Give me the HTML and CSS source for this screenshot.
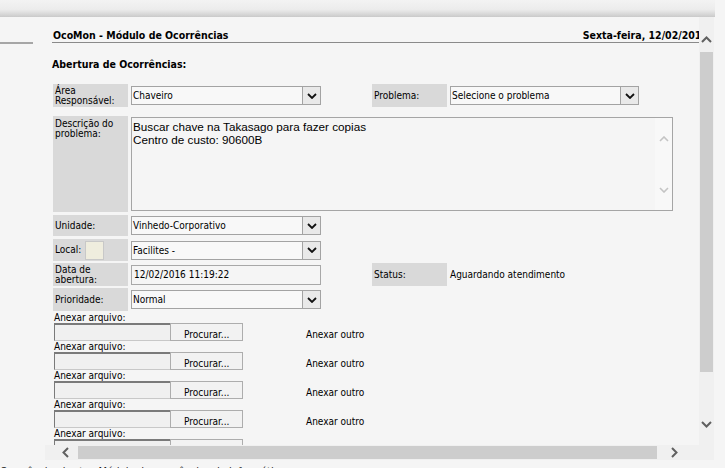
FILE: index.html
```html
<!DOCTYPE html>
<html lang="pt-BR">
<head>
<meta charset="utf-8">
<title>OcoMon - Módulo de Ocorrências</title>
<link rel="stylesheet" href="styles.css">
</head>
<body>
<div class="topbar"></div>
<div class="stage">
  <div class="gutter"><div class="gline"></div></div>
  <div class="frame">
    <div class="viewport">
      <div class="page">
        <div class="header">
          <span>OcoMon - Módulo de Ocorrências</span>
          <span class="date">Sexta-feira, 12/02/2016</span>
        </div>
        <div class="title">Abertura de Ocorrências:</div>

        <div class="row r1">
          <div class="lbl">Área<br>Responsável:</div>
          <div class="sel"><span class="val">Chaveiro</span><span class="arr"><svg width="10" height="6" viewBox="0 0 10 6"><path d="M1 1l4 4 4-4" fill="none" stroke="#111" stroke-width="1.8"/></svg></span></div>
          <div class="lbl lbl2 mid">Problema:</div>
          <div class="sel sel2"><span class="val">Selecione o problema</span><span class="arr"><svg width="10" height="6" viewBox="0 0 10 6"><path d="M1 1l4 4 4-4" fill="none" stroke="#111" stroke-width="1.8"/></svg></span></div>
        </div>

        <div class="row r2">
          <div class="lbl top">Descrição do<br>problema:</div>
          <div class="textarea">
            <div class="ta-text">Buscar chave na Takasago para fazer copias<br>Centro de custo: 90600B</div>
            <div class="ta-bar">
              <svg width="10" height="6" viewBox="0 0 10 6"><path d="M1 5l4-4 4 4" fill="none" stroke="#c4c4c4" stroke-width="1.6"/></svg>
              <svg width="10" height="6" viewBox="0 0 10 6"><path d="M1 1l4 4 4-4" fill="none" stroke="#c4c4c4" stroke-width="1.6"/></svg>
            </div>
          </div>
        </div>

        <div class="row r3">
          <div class="lbl mid">Unidade:</div>
          <div class="sel"><span class="val">Vinhedo-Corporativo</span><span class="arr"><svg width="10" height="6" viewBox="0 0 10 6"><path d="M1 1l4 4 4-4" fill="none" stroke="#111" stroke-width="1.8"/></svg></span></div>
        </div>

        <div class="row r4">
          <div class="lbl mid local">Local: <span class="pick"></span></div>
          <div class="sel"><span class="val">Facilites -</span><span class="arr"><svg width="10" height="6" viewBox="0 0 10 6"><path d="M1 1l4 4 4-4" fill="none" stroke="#111" stroke-width="1.8"/></svg></span></div>
        </div>

        <div class="row r5">
          <div class="lbl">Data de<br>abertura:</div>
          <div class="inp">12/02/2016 11:19:22</div>
          <div class="lbl lbl2 mid">Status:</div>
          <div class="plain">Aguardando atendimento</div>
        </div>

        <div class="row r6">
          <div class="lbl mid">Prioridade:</div>
          <div class="sel"><span class="val">Normal</span><span class="arr"><svg width="10" height="6" viewBox="0 0 10 6"><path d="M1 1l4 4 4-4" fill="none" stroke="#111" stroke-width="1.8"/></svg></span></div>
        </div>

        <div class="files">
          <div class="fblock">
            <div class="flabel">Anexar arquivo:</div>
            <div class="frow"><div class="file"><span class="fbox"></span><span class="fbtn">Procurar...</span></div><span class="more">Anexar outro</span></div>
          </div>
          <div class="fblock">
            <div class="flabel">Anexar arquivo:</div>
            <div class="frow"><div class="file"><span class="fbox"></span><span class="fbtn">Procurar...</span></div><span class="more">Anexar outro</span></div>
          </div>
          <div class="fblock">
            <div class="flabel">Anexar arquivo:</div>
            <div class="frow"><div class="file"><span class="fbox"></span><span class="fbtn">Procurar...</span></div><span class="more">Anexar outro</span></div>
          </div>
          <div class="fblock">
            <div class="flabel">Anexar arquivo:</div>
            <div class="frow"><div class="file"><span class="fbox"></span><span class="fbtn">Procurar...</span></div><span class="more">Anexar outro</span></div>
          </div>
          <div class="fblock">
            <div class="flabel">Anexar arquivo:</div>
            <div class="frow"><div class="file"><span class="fbox"></span><span class="fbtn">Procurar...</span></div><span class="more">Anexar outro</span></div>
          </div>
        </div>
      </div>
    </div>
    <div class="vscroll">
      <div class="vup"><svg width="11" height="7" viewBox="0 0 11 7"><path d="M1 6l4.5-4.5L10 6" fill="none" stroke="#606060" stroke-width="2"/></svg></div>
      <div class="vthumb"></div>
      <div class="vtrack"></div>
      <div class="vdown"><svg width="11" height="7" viewBox="0 0 11 7"><path d="M1 1l4.5 4.5L10 1" fill="none" stroke="#606060" stroke-width="2"/></svg></div>
    </div>
    <div class="hscroll">
      <div class="hleft"><svg width="7" height="11" viewBox="0 0 7 11"><path d="M6 1L1.5 5.5 6 10" fill="none" stroke="#606060" stroke-width="2"/></svg></div>
      <div class="hthumb"></div>
      <div class="hright"><svg width="7" height="11" viewBox="0 0 7 11"><path d="M1 1l4.5 4.5L1 10" fill="none" stroke="#606060" stroke-width="2"/></svg></div>
    </div>
    <div class="corner"></div>
  </div>
</div>
<div class="footer">Ocorrência aberta · Módulo de ocorrências de informática</div>
</body>
</html>
```
FILE: styles.css
```css
* { box-sizing: border-box; }
html, body { margin: 0; padding: 0; }
body {
  width: 725px;
  height: 468px;
  overflow: hidden;
  background: #f5f5f5;
  color: #000;
  font-family: "DejaVu Sans Condensed", "DejaVu Sans", sans-serif;
  font-stretch: condensed;
  font-size: 10px;
}
.topbar {
  width: 715px;
  height: 17px;
  background: linear-gradient(#f3f3f3 0%, #ececec 55%, #d6d6d6 85%, #c9c9c9 100%);
}
.stage { display: flex; height: 443px; }
.gutter { width: 45px; flex: none; }
.gline { margin-top: 25px; width: 33px; height: 2px; background: #a6a6a6; }

.frame {
  display: grid;
  grid-template-columns: 654px 15px;
  grid-template-rows: 428px 15px;
}
.viewport { overflow: hidden; position: relative; }
.page { width: 720px; padding-left: 7px; }

.header {
  margin-top: 11px;
  height: 15px;
  line-height: 14px;
  padding-left: 1px;
  border-bottom: 1px solid #8a8a8a;
  display: flex;
  justify-content: space-between;
  font-weight: bold;
  font-size: 10.5px;
}
.date { margin-right: 57px; white-space: nowrap; }
.title {
  margin-top: 14px;
  line-height: 14px;
  font-weight: bold;
  font-size: 10.5px;
}

.row { display: flex; align-items: center; margin-left: 1px; }
.r1 { margin-top: 13px; height: 23px; }
.r2 { margin-top: 9px; height: 96px; align-items: stretch; }
.r3 { margin-top: 3px; height: 21px; }
.r4 { margin-top: 3px; height: 22px; }
.r5 { margin-top: 2px; height: 23px; }
.r6 { margin-top: 2px; height: 23px; }

.lbl {
  width: 75px;
  align-self: stretch;
  background: #d9d9d9;
  padding: 1px 2px;
  line-height: 10px;
  flex: none;
}
.lbl.mid { display: flex; align-items: center; }
.lbl.top { padding-top: 3px; }
.lbl2 { margin-left: 51px; }
.r1 .lbl:first-child, .r5 .lbl:first-child { padding-top: 2px; }
.local { padding-right: 0; }
.pick {
  display: inline-block;
  width: 19px;
  height: 19px;
  margin-left: 4px;
  background: #efedde;
  border: 1px solid #c8c8c8;
}

.sel {
  margin-left: 3px;
  width: 190px;
  height: 19px;
  border: 1px solid #a3a3a3;
  background: #f8f8f8;
  display: flex;
  align-items: center;
  flex: none;
}
.sel2 { width: 189px; }
.val { flex: 1; padding-left: 1px; white-space: nowrap; }
.arr {
  width: 18px;
  height: 17px;
  border-left: 1px solid #a3a3a3;
  background: #e9e9e9;
  display: flex;
  align-items: center;
  justify-content: center;
}

.textarea {
  margin-left: 3px;
  margin-top: 1px;
  margin-bottom: 1px;
  width: 542px;
  border: 1px solid #a5a5a5;
  background: #f5f5f5;
  display: flex;
}
.ta-text {
  flex: 1;
  padding: 2px 1px;
  font-family: "Liberation Sans", Arial, sans-serif;
  font-stretch: normal;
  font-size: 11.7px;
  line-height: 13px;
}
.ta-bar {
  width: 17px;
  background: #f8f8f8;
  display: flex;
  flex-direction: column;
  align-items: center;
  justify-content: space-between;
  padding: 18px 0 17px;
}

.inp {
  margin-left: 3px;
  width: 190px;
  height: 20px;
  border: 1px solid #a8a8a8;
  background: #f5f5f5;
  padding-left: 2px;
  display: flex;
  align-items: center;
  flex: none;
}
.plain { margin-left: 3px; }

.files { margin-left: 2px; margin-top: 1px; }
.fblock { height: 29px; }
.flabel { height: 11px; line-height: 11px; }
.frow { display: flex; align-items: center; height: 18px; }
.file { display: flex; width: 189px; height: 18px; flex: none; }
.fbox {
  width: 116px;
  border-top: 2px solid #7a7a7a;
  border-left: 1px solid #7a7a7a;
  border-bottom: 1px solid #c8c8c8;
  background: #f0f0f0;
}
.fbtn {
  width: 73px;
  border: 1px solid #adadad;
  background: #f2f2f2;
  padding: 5px 0 0 13px;
  line-height: 11px;
}
.more { margin-left: 63px; padding-top: 4px; }

.vscroll {
  background: #f0f0f0;
  display: flex;
  flex-direction: column;
  align-items: stretch;
}
.vup { height: 35px; display: flex; justify-content: center; align-items: flex-end; padding-bottom: 9px; }
.vthumb { height: 320px; background: #cdcdcd; margin: 0 1px; }
.vtrack { flex: 1; }
.vdown { height: 37px; display: flex; justify-content: center; align-items: flex-start; padding-top: 13px; }

.hscroll { background: #f0f0f0; display: flex; align-items: stretch; }
.hleft { width: 33px; display: flex; align-items: center; justify-content: center; padding-left: 8px; }
.hthumb { width: 579px; background: #cdcdcd; margin: 1px 0; }
.hright { flex: 1; display: flex; align-items: center; justify-content: center; padding-right: 8px; }
.corner { background: #f0f0f0; }

.footer {
  margin-top: 5px;
  padding-left: 0;
  font-size: 11px;
  line-height: 14px;
  white-space: nowrap;
  color: #222;
}
```
